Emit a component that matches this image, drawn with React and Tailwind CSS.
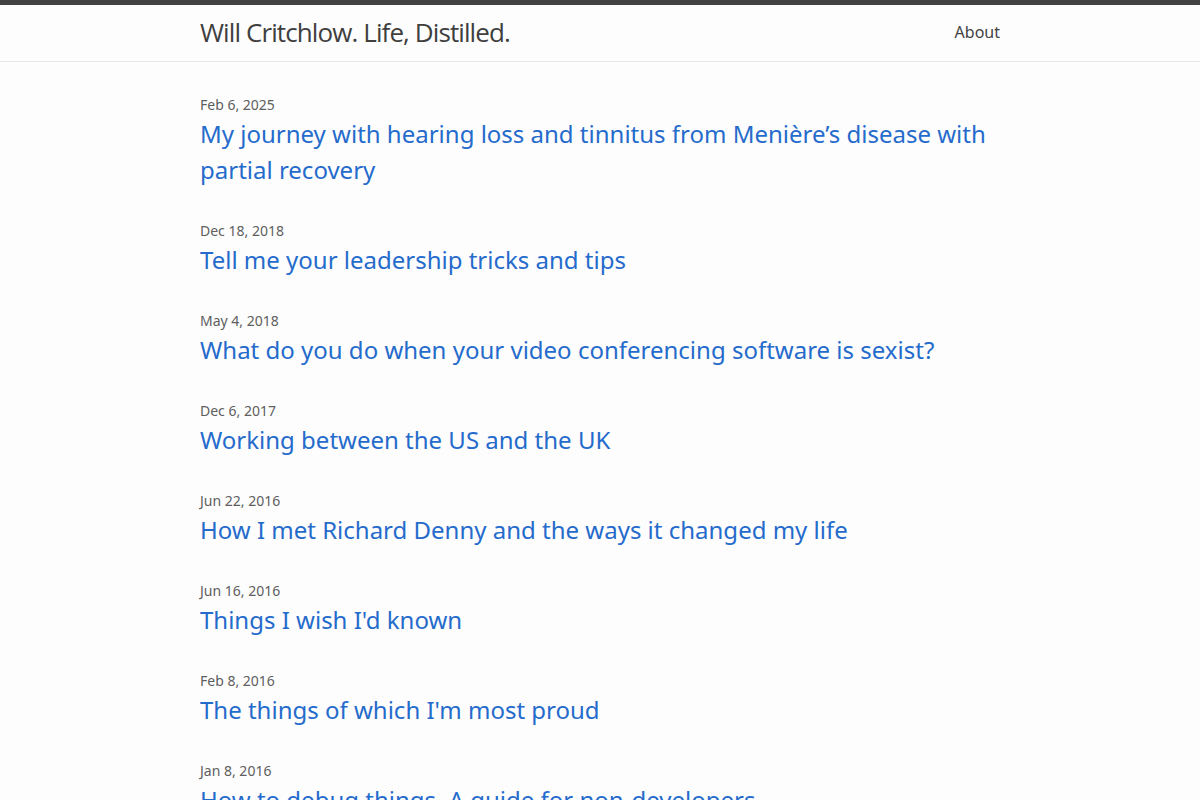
const posts = [
  { date: 'Feb 6, 2025', title: 'My journey with hearing loss and tinnitus from Menière’s disease with partial recovery' },
  { date: 'Dec 18, 2018', title: 'Tell me your leadership tricks and tips' },
  { date: 'May 4, 2018', title: 'What do you do when your video conferencing software is sexist?' },
  { date: 'Dec 6, 2017', title: 'Working between the US and the UK' },
  { date: 'Jun 22, 2016', title: 'How I met Richard Denny and the ways it changed my life' },
  { date: 'Jun 16, 2016', title: "Things I wish I'd known" },
  { date: 'Feb 8, 2016', title: "The things of which I'm most proud" },
  { date: 'Jan 8, 2016', title: 'How to debug things. A guide for non-developers' },
  { date: 'Nov 2, 2015', title: 'Some notes on writing' },
];

export default function App() {
  return (
    <div className="min-h-screen bg-[#fdfdfd] text-[#111] font-['Noto_Sans','Open_Sans',sans-serif]">
      {/* Header */}
      <header className="border-t-[5px] border-t-[#424242] border-b border-b-[#e8e8e8] h-[62px]">
        <div className="max-w-[800px] mx-auto flex items-center justify-between h-[56px] -mt-px">
          <a className="text-[26px] leading-[56px] tracking-[-0.9px] text-[#3f3f3f] font-['Open_Sans','Noto_Sans',sans-serif]">
            Will Critchlow. Life, Distilled.
          </a>
          <nav>
            <a className="text-base leading-[56px] text-[#424242]">About</a>
          </nav>
        </div>
      </header>

      {/* Post list */}
      <main className="pt-[30px]">
        <ul className="max-w-[800px] mx-auto">
          {posts.map((p) => (
            <li key={p.date} className="mb-[30px]">
              <div className="text-sm leading-6 pt-px -mb-px text-[#5e5e5e]">{p.date}</div>
              <h2 className="text-2xl leading-9">
                <a className="text-[#256bcc]">{p.title}</a>
              </h2>
            </li>
          ))}
        </ul>
      </main>
    </div>
  );
}
